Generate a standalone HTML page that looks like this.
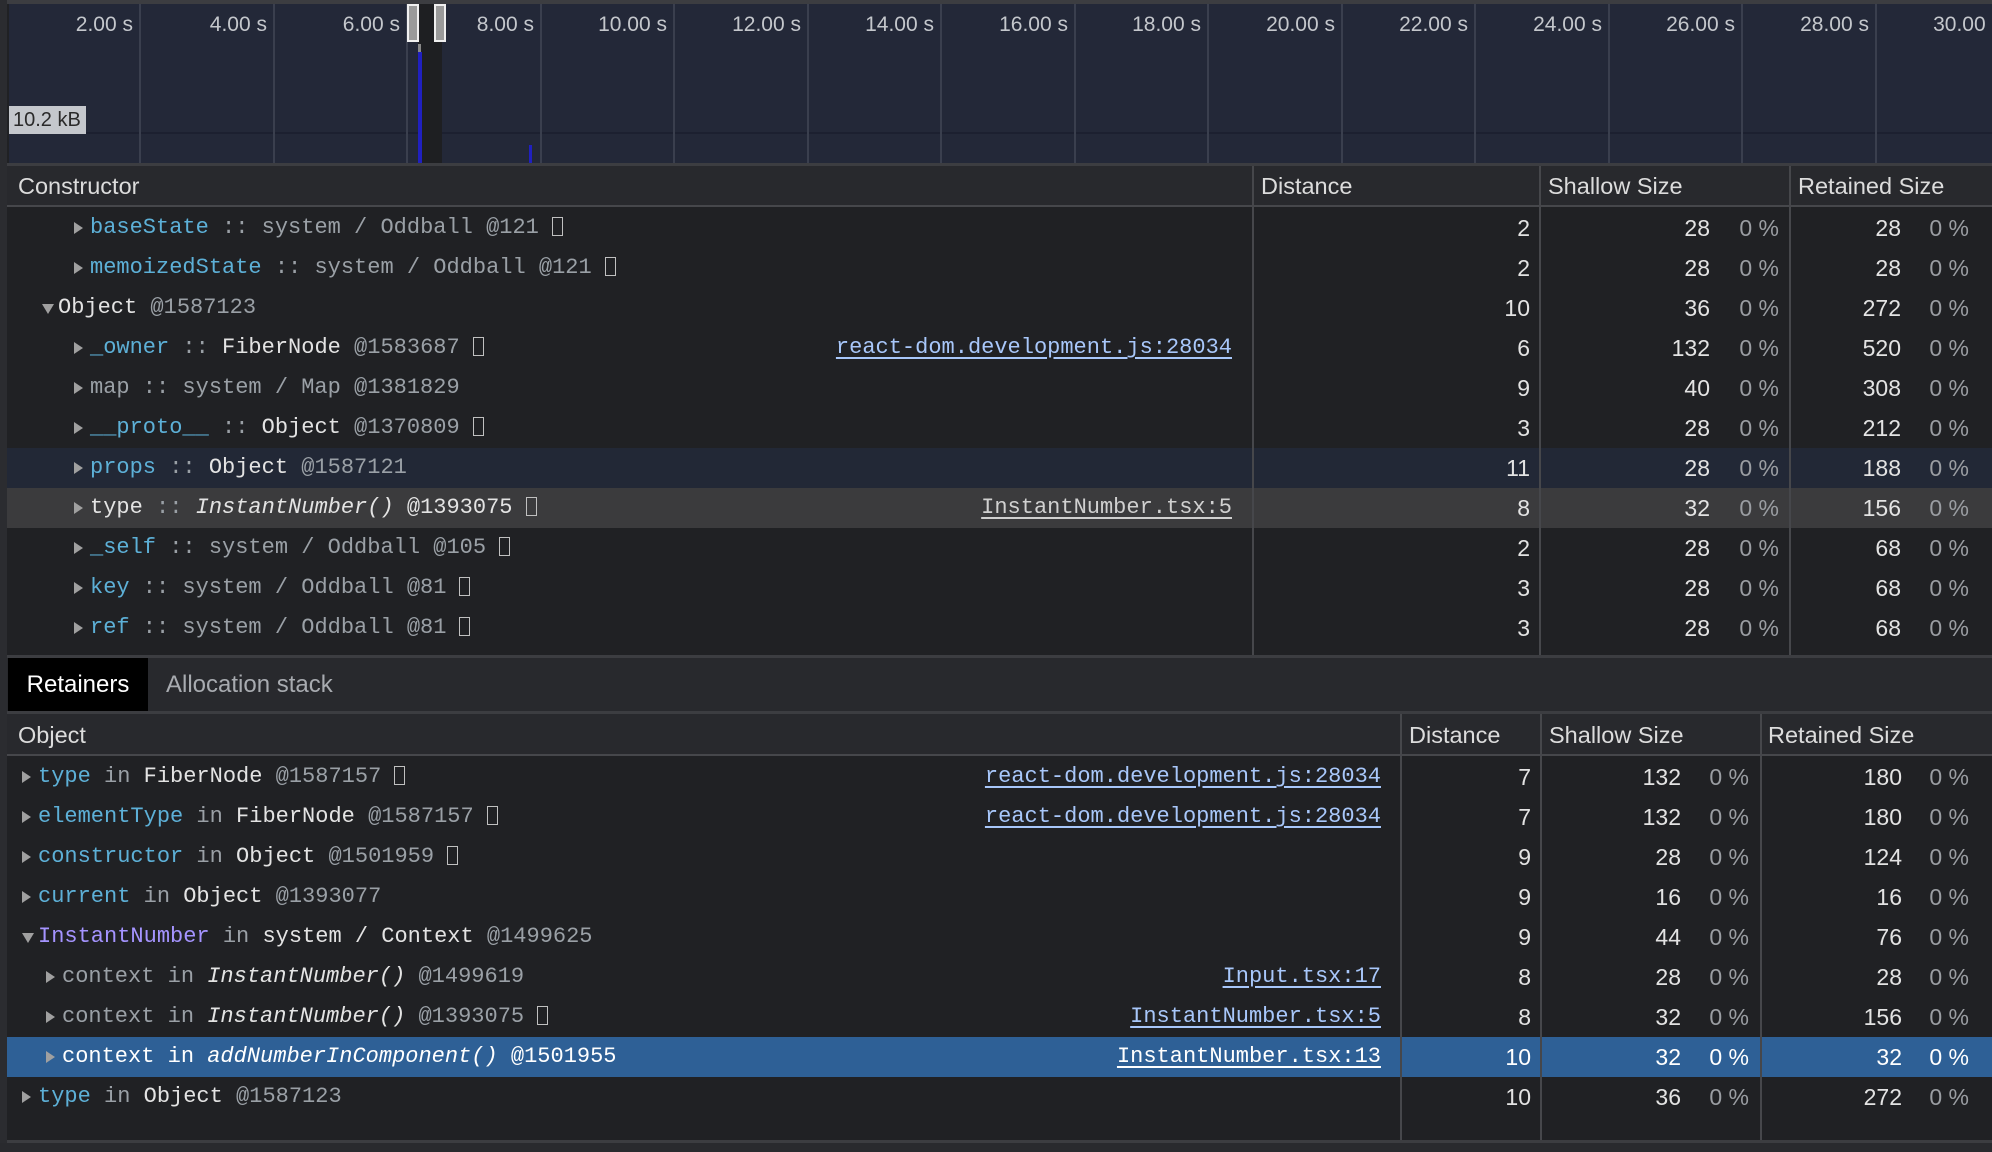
<!DOCTYPE html>
<html><head><meta charset="utf-8">
<style>
*{margin:0;padding:0;box-sizing:border-box}
body{width:1992px;height:1152px;background:#202124;overflow:hidden;position:relative;font-family:"Liberation Sans",sans-serif;color:#e3e3e3}
.abs{position:absolute}
.mono{font-family:"Liberation Mono","DejaVu Sans Mono",monospace;font-size:22px}
.row{position:absolute;left:7px;right:0;height:40px;line-height:40px;white-space:nowrap}
.row span.t{position:absolute;top:0}
.k{color:#5db0d7}.g{color:#9aa0a6}.w{color:#e3e3e3}.p{color:#a594ff}.i{font-style:italic}
.tri{position:absolute;top:14px;width:0;height:0;border-top:6px solid transparent;border-bottom:6px solid transparent;border-left:9px solid #a0a0a0}
.trid{position:absolute;top:16px;width:0;height:0;border-left:6px solid transparent;border-right:6px solid transparent;border-top:10px solid #a0a0a0}
.n{position:absolute;top:0;font-size:23px;text-align:right}
.pc{color:#9a9da2}
.lnk{position:absolute;top:0;color:#a8c7fa;text-decoration:underline;text-underline-offset:4px}
.vl{position:absolute;width:2px;background:#46474b}
.hdr{position:absolute;left:7px;right:0;background:#28292d;font-size:23.5px;color:#dcdcdc}
.box{display:inline-block;width:11px;height:19px;border:1.5px solid #c0c0c0;vertical-align:-3px;margin-left:13px}
</style></head><body>
<div class="abs" style="left:0;top:0;width:7px;height:1152px;background:#2b2c30"></div>
<div class="abs" style="left:7px;top:0;right:0;height:4px;background:#3c3d41"></div>
<div class="abs" style="left:9px;top:4px;right:0;height:159px;background:#232838"></div>
<div class="abs" style="left:9px;top:132px;right:0;height:2px;background:#1c2030"></div>
<div id="ticks"></div>
<div class="abs" style="left:418px;top:4px;width:24px;height:159px;background:#1e1f22"></div>
<div class="abs" style="left:407px;top:4px;width:12px;height:38px;background:#9a9a9a;border:2px solid #f0f0f0"></div>
<div class="abs" style="left:434px;top:4px;width:12px;height:38px;background:#9a9a9a;border:2px solid #f0f0f0"></div>
<div class="abs" style="left:418px;top:44px;width:3px;height:8px;background:#888"></div>
<div class="abs" style="left:418px;top:52px;width:4px;height:111px;background:#2020c0"></div>
<div class="abs" style="left:529px;top:145px;width:3px;height:18px;background:#2020c0"></div>
<div class="abs" style="left:9px;top:106px;width:77px;height:28px;background:#c4c7cc;color:#2a2a2a;font-size:20px;line-height:28px;padding-left:4px">10.2 kB</div>
<div class="abs" style="left:7px;top:163px;right:0;height:3px;background:#3c3d41"></div>

<div class="hdr" style="top:166px;height:41px;line-height:41px;border-bottom:2px solid #46474b">
<span class="abs" style="left:11px">Constructor</span>
<span class="abs" style="left:1254px">Distance</span>
<span class="abs" style="left:1541px">Shallow Size</span>
<span class="abs" style="left:1791px">Retained Size</span>
</div>
<div id="upper"></div>
<div class="vl" style="left:1252px;top:166px;height:490px"></div>
<div class="vl" style="left:1539px;top:166px;height:490px"></div>
<div class="vl" style="left:1789px;top:166px;height:490px"></div>

<div class="abs" style="left:7px;top:655px;right:0;height:3px;background:#3c3d41"></div>
<div class="abs" style="left:7px;top:658px;right:0;height:53px;background:#28292d"></div>
<div class="abs" style="left:8px;top:658px;width:140px;height:53px;background:#000;color:#fff;font-size:24px;line-height:53px;text-align:center">Retainers</div>
<div class="abs" style="left:166px;top:658px;height:53px;color:#a8abb0;font-size:24px;line-height:53px">Allocation stack</div>
<div class="abs" style="left:7px;top:711px;right:0;height:3px;background:#3c3d41"></div>

<div class="hdr" style="top:714px;height:42px;line-height:42px;border-bottom:2px solid #46474b">
<span class="abs" style="left:11px">Object</span>
<span class="abs" style="left:1402px">Distance</span>
<span class="abs" style="left:1542px">Shallow Size</span>
<span class="abs" style="left:1761px">Retained Size</span>
</div>
<div id="lower"></div>
<div class="vl" style="left:1400px;top:714px;height:426px"></div>
<div class="vl" style="left:1540px;top:714px;height:426px"></div>
<div class="vl" style="left:1760px;top:714px;height:426px"></div>
<div class="abs" style="left:7px;top:1140px;right:0;height:3px;background:#3c3d41"></div>
<div class="abs" style="left:0;top:1143px;right:0;height:9px;background:#292a2e"></div>

<script>
(function(){
var t='';var labels=['2.00 s','4.00 s','6.00 s','8.00 s','10.00 s','12.00 s','14.00 s','16.00 s','18.00 s','20.00 s','22.00 s','24.00 s','26.00 s','28.00 s','30.00 s'];
for(var i=0;i<labels.length;i++){var x=139+i*133.5;
if(i<14)t+='<div class="abs" style="left:'+Math.round(x)+'px;top:4px;width:2px;height:159px;background:#3a3f4e"></div>';
t+='<div class="abs" style="left:'+Math.round(x-160)+'px;top:13px;width:154px;text-align:right;font-size:21px;color:#c4c7cc;white-space:nowrap">'+labels[i]+'</div>';}
document.getElementById('ticks').innerHTML=t;

function row(top,bg,ind,tri,html,link,lcol,d,s,r,cols,fg){
var h='<div class="row mono" style="top:'+top+'px;'+(bg?'background:'+bg+';':'')+'">';
h+='<span class="'+(tri=='d'?'trid':'tri')+'" style="left:'+(ind-7)+'px"></span>';
h+='<span class="t" style="left:'+(ind+9)+'px">'+html+'</span>';
if(link)h+='<span class="lnk" style="right:'+(1992-cols[0]-1)+'px;'+(lcol?'color:'+lcol:'')+'">'+link+'</span>';
var st='font-family:Liberation Sans,sans-serif;'+(fg?'color:'+fg+';':'');
h+='<span class="n" style="right:'+(1992-cols[1])+'px;'+st+'">'+d+'</span>';
h+='<span class="n" style="right:'+(1992-cols[2])+'px;'+st+'">'+s+'</span>';
h+='<span class="n pc" style="right:'+(1992-cols[3])+'px;'+st+'">0 %</span>';
h+='<span class="n" style="right:'+(1992-cols[4])+'px;'+st+'">'+r+'</span>';
h+='<span class="n pc" style="right:'+(1992-cols[5])+'px;'+st+'">0 %</span>';
return h+'</div>';}
var B='<span class="box"></span>';
var U=[1231,1530,1710,1779,1901,1969];
var u=[
[null,74,'r','<span class="k">baseState</span><span class="g"> :: system / Oddball @121</span>'+B,'',2,28,28],
[null,74,'r','<span class="k">memoizedState</span><span class="g"> :: system / Oddball @121</span>'+B,'',2,28,28],
[null,42,'d','<span class="w">Object</span><span class="g"> @1587123</span>','',10,36,272],
[null,74,'r','<span class="k">_owner</span><span class="g"> :: </span><span class="w">FiberNode</span><span class="g"> @1583687</span>'+B,'react-dom.development.js:28034',6,132,520],
[null,74,'r','<span class="g">map :: system / Map @1381829</span>','',9,40,308],
[null,74,'r','<span class="k">__proto__</span><span class="g"> :: </span><span class="w">Object</span><span class="g"> @1370809</span>'+B,'',3,28,212],
['#222836',74,'r','<span class="k">props</span><span class="g"> :: </span><span class="w">Object</span><span class="g"> @1587121</span>','',11,28,188],
['#3b3b3d',74,'r','<span class="w">type</span><span class="g"> :: </span><span class="w i">InstantNumber()</span><span class="w"> @1393075</span>'+B,'InstantNumber.tsx:5',8,32,156],
[null,74,'r','<span class="k">_self</span><span class="g"> :: system / Oddball @105</span>'+B,'',2,28,68],
[null,74,'r','<span class="k">key</span><span class="g"> :: system / Oddball @81</span>'+B,'',3,28,68],
[null,74,'r','<span class="k">ref</span><span class="g"> :: system / Oddball @81</span>'+B,'',3,28,68]];
var h='';for(var i=0;i<u.length;i++){var a=u[i];h+=row(208+i*40,a[0],a[1],a[2],a[3],a[4],i==7?'#d0d0d0':null,a[5],a[6],a[7],U);}
document.getElementById('upper').innerHTML=h;
var L=[1380,1531,1681,1749,1902,1969];
var l=[
[null,22,'r','<span class="k">type</span><span class="g"> in </span><span class="w">FiberNode</span><span class="g"> @1587157</span>'+B,'react-dom.development.js:28034',7,132,180],
[null,22,'r','<span class="k">elementType</span><span class="g"> in </span><span class="w">FiberNode</span><span class="g"> @1587157</span>'+B,'react-dom.development.js:28034',7,132,180],
[null,22,'r','<span class="k">constructor</span><span class="g"> in </span><span class="w">Object</span><span class="g"> @1501959</span>'+B,'',9,28,124],
[null,22,'r','<span class="k">current</span><span class="g"> in </span><span class="w">Object</span><span class="g"> @1393077</span>','',9,16,16],
[null,22,'d','<span class="p">InstantNumber</span><span class="g"> in </span><span class="w">system / Context</span><span class="g"> @1499625</span>','',9,44,76],
[null,46,'r','<span class="g">context in </span><span class="w i">InstantNumber()</span><span class="g"> @1499619</span>','Input.tsx:17',8,28,28],
[null,46,'r','<span class="g">context in </span><span class="w i">InstantNumber()</span><span class="g"> @1393075</span>'+B,'InstantNumber.tsx:5',8,32,156],
['#2e6096',46,'r','<span style="color:#fff">context in <i>addNumberInComponent()</i> @1501955</span>','InstantNumber.tsx:13',10,32,32],
[null,22,'r','<span class="k">type</span><span class="g"> in </span><span class="w">Object</span><span class="g"> @1587123</span>','',10,36,272]];
h='';for(var i=0;i<l.length;i++){var a=l[i];h+=row(757+i*40,a[0],a[1],a[2],a[3],a[4],i==7?'#fff':null,a[5],a[6],a[7],L,i==7?'#fff':null);}
document.getElementById('lower').innerHTML=h;
})();
</script>
</body></html>
